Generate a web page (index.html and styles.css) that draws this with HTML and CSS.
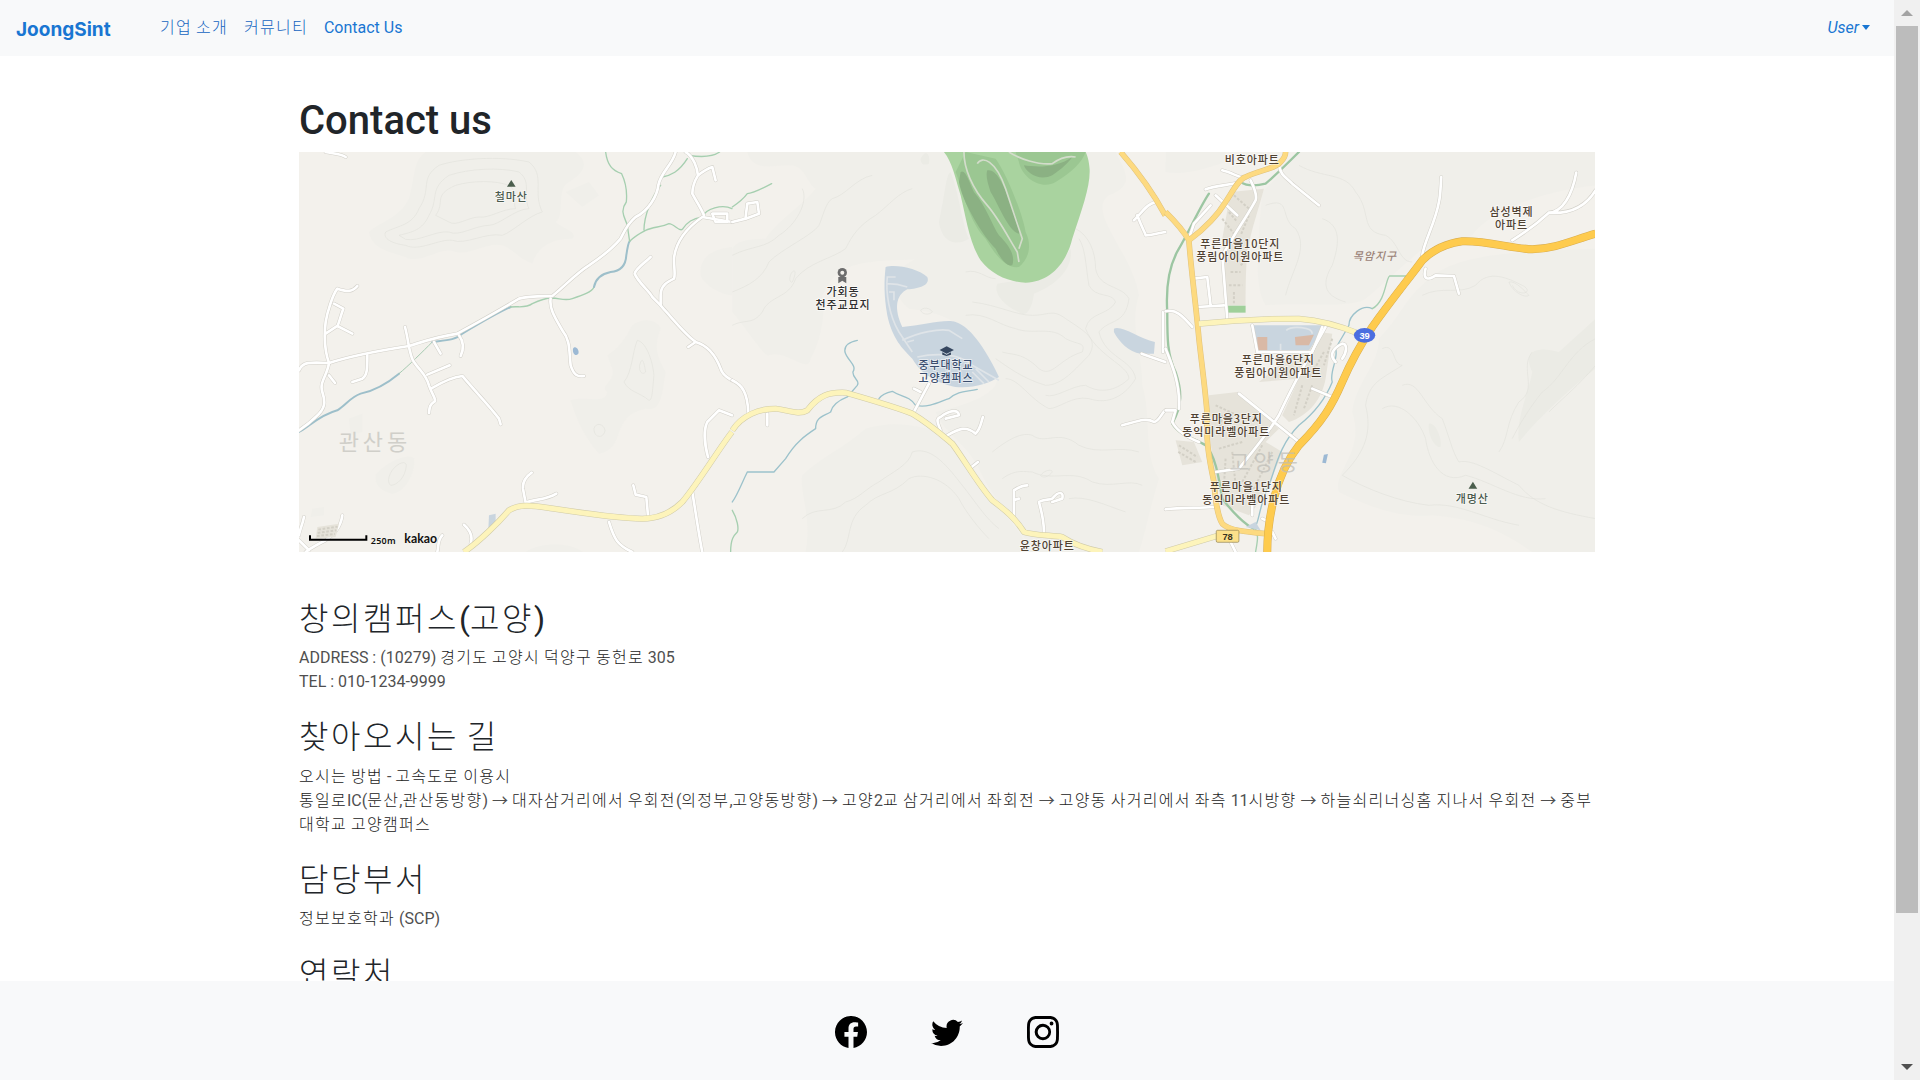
FILE: index.html
```html
<!DOCTYPE html>
<html lang="ko">
<head>
<meta charset="utf-8">
<title>JoongSint - Contact us</title>
<link rel="stylesheet" href="styles.css">
</head>
<body>
<div class="shell">
  <div class="page">
    <nav class="navbar">
      <a class="brand" href="#">JoongSint</a>
      <ul class="nav-list">
        <li><a class="nav-link" href="#"><span class="ko">기업 소개</span></a></li>
        <li><a class="nav-link" href="#"><span class="ko">커뮤니티</span></a></li>
        <li><a class="nav-link" href="#">Contact Us</a></li>
      </ul>
      <a class="nav-link user-link" href="#">User</a>
    </nav>
    <main class="content">
      <div class="container">
        <h1 class="page-title">Contact us</h1>
        <div class="map">
          <svg class="map-svg" viewBox="0 0 1296 400" xmlns="http://www.w3.org/2000/svg">
            <defs>
              <g id="roads-a">
                <path d="M0 655C10 630 30 630 90 633C130 620 180 605 330 582C370 570 410 555 475 545C530 515 610 470 660 440C690 432 730 433 760 432C800 400 830 365 870 340C900 320 940 290 965 260C975 240 985 215 1010 195C1050 175 1075 130 1078 100C1085 60 1120 40 1130 0"/>
                <path d="M1299 210C1270 205 1240 200 1210 195C1160 230 1130 270 1125 320C1125 350 1130 370 1125 380C1105 390 1085 400 1085 430L1085 460"/>
                <path d="M1055 315C1040 330 1010 350 1007 365C1020 395 1050 415 1060 435L1085 460C1120 500 1160 550 1190 570C1225 580 1250 610 1265 650C1270 670 1290 680 1299 685M1190 570L1168 585"/>
                <path d="M1160 0C1185 15 1195 50 1197 70C1185 90 1180 110 1180 125C1190 145 1205 165 1215 190M1197 70C1210 60 1225 50 1240 45L1250 85M1240 185H1285V210H1250Z"/>
                <path d="M80 0C100 5 125 5 140 15M755 440C750 470 770 500 790 535C815 565 810 600 815 640C825 670 835 675 855 672"/>
                <path d="M175 402C160 420 145 420 115 410C100 430 85 480 80 510C75 550 75 590 90 633C85 670 60 690 70 720C80 750 80 770 50 795C30 815 15 825 0 835M105 455L133 470C125 490 120 515 115 522L80 545M115 522L160 545M90 670L108 693"/>
                <path d="M318 525C330 570 330 610 345 630C365 660 380 665 390 700C400 730 415 745 405 750C390 760 392 770 390 783M385 668L452 640M400 708C430 690 460 675 490 672C530 720 570 760 600 800L605 817"/>
                <path d="M205 610C205 650 205 670 190 680L160 690M405 570L425 605M480 550C495 570 495 590 485 612"/>
                <path d="M698 962C680 975 670 990 672 1010L680 1052C710 1040 740 1045 772 1025M1003 1000L1010 1028L1042 1035L1047 1090M930 1110C945 1160 955 1180 1000 1200M495 1118C520 1140 520 1160 515 1175"/>
                <path d="M130 1090C125 1130 100 1150 80 1165C60 1175 40 1185 20 1200M15 1095C10 1120 0 1140 0 1150M0 1165L30 1195M430 1150C415 1165 420 1180 415 1200M1180 1020C1190 1080 1200 1150 1210 1200"/>
                <path d="M1227 915C1215 870 1215 830 1225 810L1260 775L1299 790"/>
              </g>
              <g id="roads-b">
                <path d="M0 210L40 200L80 185L75 150L45 155L40 195M0 685C30 700 45 720 48 780M105 785L105 820"/>
                <path d="M590 695L545 780M545 710L565 720M625 835C615 810 610 800 625 795C650 775 680 770 680 790L640 800M645 850C680 830 700 820 730 845C745 830 745 815 752 795M718 945L737 930"/>
                <path d="M845 1090L845 1015C860 1005 870 1000 885 1000M845 1045L860 1040M935 1140C935 1100 925 1070 920 1050C935 1040 950 1045 960 1040C980 1015 995 1020 990 1040L960 1050"/>
                <path d="M1170 820C1210 810 1240 795 1265 810C1280 810 1290 780 1299 775M1240 250C1255 250 1270 245 1299 240M1205 205C1240 170 1240 160 1270 150M1215 190C1230 230 1240 245 1240 250M1228 605L1299 630M1292 480V600"/>
              </g>
              <g id="roads-c">
                <path d="M120 112C150 100 190 100 225 90M170 55C190 60 210 70 225 75M255 85C265 105 275 130 270 145C240 200 210 240 195 270L170 310L185 500M150 130L215 190M135 160L85 215L70 260M340 40C345 70 360 75 380 95L460 160"/>
                <path d="M85 380L125 375L135 460M95 465L175 460M0 478C30 470 50 490 80 525M0 590C20 640 45 700 40 770M0 775L30 775L20 810C30 830 50 850 100 870M260 520L275 600L440 600L470 525"/>
                <path d="M480 525C450 580 390 680 340 790C310 840 260 900 220 950L150 960M220 725L400 870M440 710L500 735M510 630C490 610 500 590 530 575C545 575 545 600 530 620M0 1072C50 1065 100 1070 145 1065"/>
                <path d="M770 310C775 270 810 210 820 150C825 130 825 100 827 75M780 350C770 385 790 385 810 370L865 372L880 425M1040 265C1080 240 1120 210 1150 182C1190 185 1250 180 1290 115M1150 182C1190 180 1220 130 1232 62"/>
                <path d="M260 1050L260 1090M290 1100L300 1105M320 1140L330 1160M195 1170L210 1200"/>
              </g>
            </defs>
            <rect class="land" width="1296" height="400"/>

            <!-- west third -->
            <g transform="scale(.3333)">
              <path class="hill" d="M210 240C240 210 300 200 330 140C350 70 340 30 380 0L830 0C870 30 860 60 810 90C770 110 800 190 770 210C790 230 840 240 820 260C780 260 720 270 700 335C660 320 640 290 610 280C560 270 520 310 470 300C430 280 380 330 330 320C290 300 220 300 210 240Z"/>
              <path class="hill" d="M925 610C960 590 980 560 1000 520C1040 490 1080 510 1085 530C1060 590 1080 620 1100 660C1090 720 1090 780 1040 770C1000 780 980 790 960 840C950 880 930 900 900 905C860 860 830 800 815 745C860 730 920 760 925 720C900 700 950 690 940 650Z"/>
              <path class="hill" d="M230 970C260 930 330 900 345 920C350 960 320 1020 280 1025C250 1020 225 1000 230 970Z"/>
              <path class="hill" d="M1299 285C1250 290 1200 310 1205 370C1215 400 1270 430 1299 430ZM680 1200C720 1170 820 1170 850 1200Z"/>
              <path class="hill" d="M800 120L870 90L900 130L850 165ZM150 800L190 785L190 840L155 850ZM40 1070L75 1065L75 1090L35 1095Z"/>
              <path class="contour" d="M260 240C300 220 340 220 360 170C400 110 360 80 420 40C480 20 600 10 690 30C740 70 700 120 730 180C690 190 640 240 610 250C560 240 500 280 460 265C420 260 360 300 320 280C280 275 250 260 260 240Z"/>
              <path class="contour" d="M300 250C340 240 370 235 390 190C420 140 390 110 450 70C510 50 600 45 660 60C700 90 670 130 690 170C650 170 600 220 570 220C530 220 480 255 450 240C410 235 360 270 320 262Z"/>
              <path class="contour" d="M410 190C440 150 400 130 470 100C520 85 590 85 630 100C660 120 640 150 650 170C610 170 570 200 540 195C510 195 470 225 450 210Z"/>
              <path class="contour" d="M975 690C1000 660 1000 600 1015 565C1040 570 1060 620 1065 670C1060 720 1060 745 1050 745C1020 720 990 720 975 690ZM1022 640C1030 610 1035 630 1040 660C1030 670 1020 660 1022 640ZM885 830C890 810 915 815 918 835C915 860 885 860 885 830ZM270 975C280 940 320 920 322 940C320 975 295 1000 275 1000C268 995 268 985 270 975Z"/>
              <path class="river blue" d="M0 840C30 825 60 790 115 775C140 760 155 735 185 725C230 715 270 690 300 665"/>
              <path class="river green" d="M300 665C330 640 370 600 400 570"/>
              <path class="river blue" d="M400 570C440 565 470 565 490 545C540 515 600 480 635 465"/>
              <path class="river thin" d="M635 465C660 462 680 470 700 455C720 445 745 438 760 438C785 440 800 447 820 440C850 430 880 420 885 405"/>
              <path class="river blue" d="M885 405C890 380 910 365 935 360C960 358 980 345 982 310C985 290 990 270 992 268"/>
              <path class="river thin" d="M992 268C1010 250 1030 240 1040 235C1060 225 1090 225 1110 215C1125 215 1140 240 1150 232C1165 210 1180 200 1210 195C1220 170 1270 155 1299 170M920 0C925 40 940 55 968 65C980 90 985 120 982 150C960 180 980 200 985 220L992 268M1165 20C1140 60 1115 70 1090 75M1085 100C1060 130 1035 190 1035 235M1170 10C1200 15 1240 15 1262 0"/>
              <use href="#roads-a" class="casing"/>
              <use href="#roads-a" class="fill"/>
              <path class="block" d="M55 1125L120 1115L110 1155L50 1160Z"/>
              <path class="apt-lines" d="M58 1133L116 1124M56 1143L112 1135M54 1152L108 1146"/>
              <path class="campus" d="M570 1090L590 1085L590 1120L568 1135Z"/>
              <path class="lake" d="M822 590C830 578 842 595 838 605C830 615 820 605 822 590Z"/>
              <path class="sec-case" d="M495 1200C540 1170 600 1110 630 1075C660 1055 700 1060 750 1068C830 1080 960 1100 1030 1100C1090 1100 1130 1070 1150 1050C1200 990 1260 890 1299 840"/>
              <path class="sec-fill" d="M495 1200C540 1170 600 1110 630 1075C660 1055 700 1060 750 1068C830 1080 960 1100 1030 1100C1090 1100 1130 1070 1150 1050C1200 990 1260 890 1299 840"/>
              <path class="peak" d="M637 84L650 104H624Z"/>
              <text class="lbl lbl-peak" x="637" y="148">철마산</text>
              <text class="dong" x="228" y="895">관산동</text>
              <path class="scale" d="M33 1150V1163H202V1150"/>
              <text class="scale-txt" x="215" y="1175">250m</text>
              <text class="kakao" x="316" y="1172">kakao</text>
            </g>

            <!-- middle third -->
            <g transform="translate(433.3) scale(.3333)">
              <path class="hill" d="M45 0C60 60 120 40 170 40C220 40 220 90 250 110C200 170 130 210 100 260C40 260 10 270 0 290L0 480C50 540 100 620 110 610C160 590 230 670 235 620C270 560 280 470 270 430C290 400 300 340 420 330C470 320 600 330 640 300L640 0Z"/>
              <path class="hill" d="M600 0H1150C1180 60 1210 100 1130 130C1060 180 1200 300 1220 430C1190 520 1230 600 1230 700C1260 800 1230 900 1280 980C1250 1080 1240 1140 1220 1200H900C860 1120 780 1040 740 950C700 870 640 850 610 780C790 740 820 690 780 640C700 500 620 480 530 470C450 400 480 340 600 300Z"/>
              <path class="hill" d="M210 970C260 920 330 890 400 830C470 810 540 810 640 850C700 900 780 1040 860 1140C880 1170 900 1200 900 1200H220C240 1090 200 1020 210 970Z"/>
              <path class="hill2" d="M620 210C640 120 640 70 655 60C680 120 690 220 710 260C680 280 630 280 620 210ZM795 395C840 385 950 390 1015 290C1025 350 970 400 905 425C900 470 880 500 860 480C830 470 780 430 795 395ZM565 20C580 -10 595 5 590 35C580 40 565 40 565 20Z"/>
              <path class="contour" d="M0 310C60 280 100 290 140 250C190 220 230 150 210 110M0 420C50 400 90 380 110 330C150 290 240 250 260 220C270 200 280 150 300 140C340 130 370 80 420 70M0 520C40 500 60 520 90 480C110 430 170 440 190 380C230 330 300 320 340 290C360 250 380 220 430 190C470 160 500 120 540 110"/>
              <path class="contour" d="M180 360C190 350 192 365 180 390C170 395 170 370 180 360ZM565 475C580 460 600 475 600 480C590 490 570 488 565 475ZM925 970C935 955 960 950 960 960C950 975 930 980 925 970Z"/>
              <path class="contour" d="M700 490C760 480 800 520 850 530C900 550 960 520 1000 560C1040 580 1060 570 1050 600C980 620 960 680 920 650C870 600 840 610 810 600M720 450C800 460 850 490 900 490C950 490 960 470 1000 500C1060 540 1100 560 1070 610C1030 650 990 700 940 700C870 680 820 640 790 620M700 360C740 350 760 380 790 380M1030 230C1070 250 1090 300 1090 350C1100 410 1170 400 1190 440C1180 520 1130 500 1100 540C1120 620 1200 620 1210 680C1180 730 1130 760 1070 740C1020 730 980 770 950 770C890 740 860 680 820 680M1040 260C1060 290 1060 340 1070 400C1090 440 1140 420 1150 450C1130 490 1070 480 1060 530C1090 610 1190 640 1190 680C1160 710 1110 730 1060 700C1020 700 970 740 940 730"/>
              <path class="contour" d="M210 1100C250 1060 300 1090 340 1050C380 1040 400 1010 440 990C480 960 530 940 540 900C600 880 650 950 690 1000C730 1050 760 1100 800 1130M330 1200C360 1160 340 1100 400 1060C440 1020 480 1030 530 980C570 960 640 980 680 1040C700 1080 740 1130 770 1160M780 900C830 860 870 840 900 850C940 880 980 830 1040 880C1100 910 1160 880 1220 900M810 980C850 950 880 960 900 960C960 990 1020 950 1080 990C1140 1010 1190 980 1230 1000M1010 1040C1060 1030 1120 1060 1180 1080"/>
              <path class="river thin" d="M118 95C90 110 60 125 45 125C30 145 15 155 0 165"/>
              <path class="campus" d="M460 345C490 335 560 350 585 375C595 400 560 410 525 412C490 430 485 470 510 525C570 520 640 500 670 510C720 525 770 610 800 675C770 695 720 710 670 705C630 695 575 680 540 620C510 590 480 560 465 490C455 430 455 390 460 345Z"/>
              <path class="campus" d="M1145 530C1170 520 1220 560 1268 570L1265 605L1225 605C1190 600 1160 570 1145 540Z"/>
              <path class="golf" d="M635 0C660 30 670 80 685 130C700 190 710 270 745 325C780 370 830 390 880 392C950 390 1000 340 1020 260C1050 170 1075 100 1072 50C1070 25 1065 10 1060 0Z"/>
              <path class="golf-mid" d="M670 60C690 110 710 210 760 260C790 310 820 350 860 345C890 320 900 280 880 240C870 180 820 60 790 20L700 0ZM860 30C870 80 930 115 970 90C1020 60 1050 30 1060 0H850Z"/>
              <path class="golf-dark" d="M685 60C700 50 710 90 725 120C760 160 780 220 800 250C830 280 850 310 840 340C820 345 800 310 790 290C750 250 690 150 680 90ZM765 55C790 50 810 90 830 140C850 190 870 240 860 245C830 240 800 160 775 120C765 90 760 70 765 55ZM875 40C880 60 920 90 960 70C990 50 1010 30 1020 15C970 50 910 45 875 40Z"/>
              <path class="golf-path" d="M695 0C695 50 720 110 765 160C800 200 830 260 855 300L860 330M735 35C750 10 790 25 820 110C840 170 860 230 870 260L860 290M830 0C860 20 920 40 960 35C980 20 1000 10 1030 15"/>
              <path class="campus-road" d="M490 375H465C460 420 470 490 500 540L540 600M465 395C490 395 510 400 525 405M470 420H485V445M510 565C560 540 620 530 650 535L690 560M525 570L545 565M555 615C600 605 680 600 720 640L800 685M730 650L770 690M720 660L755 695"/>
              <path class="river blue-thin" d="M375 565C350 570 335 580 338 600C345 625 375 640 362 660C360 680 385 685 375 700L345 735C320 745 300 760 295 780C270 795 250 795 250 830C220 850 190 870 160 920L125 960L45 960C30 990 15 1030 0 1050"/>
              <path class="river thin" d="M0 1075C15 1100 20 1130 15 1140C5 1150 -5 1160 -5 1200"/>
              <path class="river blue-thin" d="M440 740C450 725 470 720 480 718C505 735 530 730 550 760C590 770 630 745 650 740C680 715 700 720 735 712"/>
              <use href="#roads-b" class="casing"/>
              <use href="#roads-b" class="fill"/>
              <path class="sec-case" d="M0 835C30 790 80 770 130 770C170 775 200 790 225 775C260 730 290 720 340 722C420 745 490 765 540 785C590 815 630 850 660 875C700 930 740 1000 780 1045C820 1075 850 1100 875 1140C900 1150 960 1150 990 1155C1020 1175 1060 1190 1110 1200"/>
              <path class="sec-fill" d="M0 835C30 790 80 770 130 770C170 775 200 790 225 775C260 730 290 720 340 722C420 745 490 765 540 785C590 815 630 850 660 875C700 930 740 1000 780 1045C820 1075 850 1100 875 1140C900 1150 960 1150 990 1155C1020 1175 1060 1190 1110 1200"/>
              <path class="art-case" d="M1165 0C1200 40 1250 100 1299 190"/>
              <path class="art-fill" d="M1165 0C1200 40 1250 100 1299 190"/>
              <path class="grave" d="M318 375V394L330 386L342 394V375Z"/>
              <circle class="grave" cx="330" cy="362" r="14"/>
              <circle class="grave-in" cx="330" cy="362" r="6"/>
              <text class="lbl lbl-dark" x="332" y="433">가회동</text>
              <text class="lbl lbl-dark" x="332" y="471">천주교묘지</text>
              <path class="cap" d="M643 583L665 594L643 605L622 594ZM630 601V608L643 612L656 608V601L643 608Z"/>
              <text class="lbl lbl-campus" x="641" y="651">중부대학교</text>
              <text class="lbl lbl-campus" x="641" y="691">고양캠퍼스</text>
              <text class="lbl lbl-apt" x="945" y="1193">윤창아파트</text>
            </g>

            <!-- east third -->
            <g transform="translate(866.6) scale(.3333)">
              <path class="hill" d="M0 0H180V30C120 50 60 70 0 60Z"/>
              <path class="hill" d="M290 120C280 250 260 400 300 460C400 450 560 470 600 440C650 400 700 350 760 300C820 270 900 260 920 250C960 190 1100 120 1290 100V0H400C380 30 340 70 290 120Z"/>
              <path class="hill" d="M640 560C700 500 720 440 770 400C850 310 1000 300 1290 290V1200H1100C1000 1130 920 1100 800 1090C700 1100 600 1060 520 1020C500 960 600 900 560 780C570 690 640 640 640 560Z"/>
              <path class="hill2" d="M1060 870C1050 800 1090 720 1100 660C1070 600 1110 580 1180 600L1290 500V650C1200 720 1100 820 1060 870ZM790 815C810 810 830 860 825 885C810 890 785 850 790 815Z"/>
              <path class="contour" d="M650 590C690 570 680 640 710 640C650 680 610 690 600 760C620 840 600 900 530 970C600 1010 700 1050 790 1060C880 1050 950 1100 1060 1120M710 700C760 680 770 760 830 800C850 850 860 900 880 930C920 920 980 960 1060 1000C1110 1060 1180 1080 1290 1100M650 770C700 740 760 800 780 860C790 930 830 1000 900 970C980 990 1060 1050 1140 1040M770 430C830 400 880 430 930 400C970 350 1030 380 1070 400C1110 420 1060 440 1040 400M1030 390C1050 385 1080 420 1090 430C1080 440 1040 420 1030 390"/>
              <path class="contour" d="M1100 600C1060 650 1120 710 1060 750C1020 810 1030 860 1000 900M1290 560C1210 600 1190 680 1130 720C1090 770 1060 820 1040 860M1290 640C1240 700 1190 740 1150 780M300 160C380 130 340 200 390 230C430 290 380 350 360 430M400 40C470 80 540 60 570 120C620 180 580 240 660 250C700 270 700 330 740 330M470 200C530 220 520 280 500 340C470 390 470 430 540 450"/>
              <path class="block" d="M195 120L295 110C280 170 260 220 245 300C240 360 240 420 240 460H185L175 330L170 260Z"/>
              <rect class="park" x="183" y="461" width="57" height="21"/>
              <path class="block" d="M280 690L460 540L500 545L480 680C470 740 430 790 370 810L350 790L400 680Z"/>
              <path class="block" d="M130 730L215 720L340 830L300 870L350 900C330 960 280 1060 250 1090L170 1060L145 950L130 830Z"/>
              <path class="block" d="M30 865L85 870L110 930L50 940Z"/>
              <path class="apt-lines" d="M205 130L250 170M190 180L215 210M170 200L205 245M195 360H225M190 400H230M205 420V455M225 340L245 320M250 190L225 250M500 560L475 640M475 600L430 680M410 700L385 790M440 700L415 770M150 760L215 790M170 790L160 850M160 890L230 870M180 920L175 1000M200 900L210 1000M290 880L230 990M320 900L260 1020M40 880L95 915M38 900L90 930"/>
              <path class="river green-wide" d="M400 0C370 30 330 70 300 95C260 105 240 100 225 90M130 125C100 170 70 240 40 290C10 340 0 400 5 480C5 560 5 610 30 660C50 720 50 760 20 815C40 850 90 860 120 880C150 910 160 980 170 1040C200 1080 240 1120 265 1130"/>
              <path class="river blue-thin" d="M265 1130C280 1120 280 1060 310 1000C330 950 340 880 400 820C450 780 480 740 500 690C490 660 520 620 510 590C520 570 540 540 550 520C550 490 590 455 620 470"/>
              <path class="river thin" d="M620 470C660 450 660 380 672 372L725 372M270 1200C275 1170 280 1150 270 1130"/>
              <path class="campus" d="M255 520H470C460 550 430 600 420 605L275 600Z"/>
              <path class="campus" d="M240 1125L285 1135L270 1110Z"/>
              <path class="bldg" d="M275 555H305V595H275ZM388 555L445 548L430 580H390Z"/>
              <path class="campus-road" d="M362 535C380 520 440 525 440 545M345 575V595"/>
              <path class="lake" d="M475 908L487 906L481 934L470 932Z"/>
              <use href="#roads-c" class="casing"/>
              <use href="#roads-c" class="fill"/>
              <path class="art-case" d="M0 180C20 200 50 230 70 265C75 340 90 450 100 560C110 650 120 720 125 790C120 860 130 920 145 990C150 1050 155 1090 170 1115C190 1135 240 1140 300 1145"/>
              <path class="art-case" d="M70 265C110 235 150 200 180 150C200 120 220 80 240 75C280 55 330 50 345 30C355 20 360 10 360 0"/>
              <path class="art-fill" d="M0 180C20 200 50 230 70 265C75 340 90 450 100 560C110 650 120 720 125 790C120 860 130 920 145 990C150 1050 155 1090 170 1115C190 1135 240 1140 300 1145"/>
              <path class="art-fill" d="M70 265C110 235 150 200 180 150C200 120 220 80 240 75C280 55 330 50 345 30C355 20 360 10 360 0"/>
              <path class="sec-case" d="M100 515C200 505 310 500 400 500C470 505 520 520 580 545M0 1198C60 1180 110 1165 155 1152"/>
              <path class="sec-fill" d="M100 515C200 505 310 500 400 500C470 505 520 520 580 545M0 1198C60 1180 110 1165 155 1152"/>
              <path class="maj-case" d="M1290 245C1220 265 1170 290 1100 292C1040 290 960 265 890 268C840 275 800 295 770 325C730 380 680 440 620 525C590 570 560 620 530 690C500 760 470 810 400 880C360 930 340 980 325 1040C310 1100 305 1160 305 1200"/>
              <path class="maj-fill" d="M1290 245C1220 265 1170 290 1100 292C1040 290 960 265 890 268C840 275 800 295 770 325C730 380 680 440 620 525C590 570 560 620 530 690C500 760 470 810 400 880C360 930 340 980 325 1040C310 1100 305 1160 305 1200"/>
              <ellipse class="route-39" cx="597" cy="550" rx="32" ry="22"/>
              <text class="route-txt route-txt-w" x="597" y="560">39</text>
              <rect class="route-78" x="152" y="1135" width="68" height="36" rx="4"/>
              <text class="route-txt route-txt-d" x="186" y="1163">78</text>
              <text class="lbl lbl-apt" x="260" y="36">비호아파트</text>
              <text class="lbl lbl-apt" x="224" y="288">푸른마을10단지</text>
              <text class="lbl lbl-apt" x="224" y="326">풍림아이원아파트</text>
              <text class="lbl lbl-apt" x="1038" y="193">삼성벽제</text>
              <text class="lbl lbl-apt" x="1038" y="230">아파트</text>
              <text class="lbl lbl-district" x="628" y="325">목암지구</text>
              <text class="lbl lbl-apt" x="338" y="636">푸른마을6단지</text>
              <text class="lbl lbl-apt" x="338" y="675">풍림아이원아파트</text>
              <text class="lbl lbl-apt" x="182" y="813">푸른마을3단지</text>
              <text class="lbl lbl-apt" x="182" y="853">동익미라벨아파트</text>
              <text class="dong dong-light" x="300" y="955">고양동</text>
              <text class="lbl lbl-apt" x="242" y="1016">푸른마을1단지</text>
              <text class="lbl lbl-apt" x="242" y="1056">동익미라벨아파트</text>
              <path class="peak" d="M922 989L935 1010H909Z"/>
              <text class="lbl lbl-peak" x="920" y="1053">개명산</text>
            </g>
          </svg>
        </div>

        <section class="info first">
          <h2><span class="ko">창의캠퍼스</span>(<span class="ko">고양</span>)</h2>
          <p>ADDRESS : (10279) <span class="ko">경기도 고양시 덕양구 동헌로</span> 305<br>TEL : 010-1234-9999</p>
        </section>
        <section class="info">
          <h2><span class="ko">찾아오시는 길</span></h2>
          <p><span class="ko">오시는 방법</span> - <span class="ko">고속도로 이용시</span><br><span class="ko">통일로</span>IC(<span class="ko">문산</span>,<span class="ko">관산동방향</span>) → <span class="ko">대자삼거리에서 우회전</span>(<span class="ko">의정부</span>,<span class="ko">고양동방향</span>) → <span class="ko">고양</span>2<span class="ko">교 삼거리에서 좌회전</span> → <span class="ko">고양동 사거리에서 좌측</span> 11<span class="ko">시방향</span> → <span class="ko">하늘쇠리너싱홈 지나서 우회전</span> → <span class="ko">중부</span><span class="ko">대학교 고양캠퍼스</span></p>
        </section>
        <section class="info">
          <h2><span class="ko">담당부서</span></h2>
          <p><span class="ko">정보보호학과</span> (SCP)</p>
        </section>
        <section class="info">
          <h2><span class="ko">연락처</span></h2>
        </section>
      </div>
    </main>
    <footer class="footer">
      <a class="social" href="#" aria-label="Facebook">
        <svg viewBox="0 0 16 16" class="social-icon"><path d="M16 8.049c0-4.446-3.582-8.05-8-8.05C3.58 0-.002 3.603-.002 8.05c0 4.017 2.926 7.347 6.75 7.951v-5.625h-2.03V8.05H6.75V6.275c0-2.017 1.195-3.131 3.022-3.131.876 0 1.791.157 1.791.157v1.98h-1.009c-.993 0-1.303.621-1.303 1.258v1.51h2.218l-.354 2.326H9.25V16c3.824-.604 6.75-3.934 6.75-7.951z"/></svg>
      </a>
      <a class="social" href="#" aria-label="Twitter">
        <svg viewBox="0 0 16 16" class="social-icon"><path d="M5.026 15c6.038 0 9.341-5.003 9.341-9.334 0-.14 0-.282-.006-.422A6.685 6.685 0 0 0 16 3.542a6.658 6.658 0 0 1-1.889.518 3.301 3.301 0 0 0 1.447-1.817 6.533 6.533 0 0 1-2.087.793A3.286 3.286 0 0 0 7.875 6.03a9.325 9.325 0 0 1-6.767-3.429 3.289 3.289 0 0 0 1.018 4.382A3.323 3.323 0 0 1 .64 6.575v.045a3.288 3.288 0 0 0 2.632 3.218 3.203 3.203 0 0 1-.865.115 3.23 3.23 0 0 1-.614-.057 3.283 3.283 0 0 0 3.067 2.277A6.588 6.588 0 0 1 .78 13.58a6.32 6.32 0 0 1-.78-.045A9.344 9.344 0 0 0 5.026 15z"/></svg>
      </a>
      <a class="social" href="#" aria-label="Instagram">
        <svg viewBox="0 0 16 16" class="social-icon"><path d="M8 0C5.829 0 5.556.01 4.703.048 3.85.088 3.269.222 2.76.42a3.917 3.917 0 0 0-1.417.923A3.927 3.927 0 0 0 .42 2.76C.222 3.268.087 3.85.048 4.7.01 5.555 0 5.827 0 8.001c0 2.172.01 2.444.048 3.297.04.852.174 1.433.372 1.942.205.526.478.972.923 1.417.444.445.89.719 1.416.923.51.198 1.09.333 1.942.372C5.555 15.99 5.827 16 8 16s2.444-.01 3.298-.048c.851-.04 1.434-.174 1.943-.372a3.916 3.916 0 0 0 1.416-.923c.445-.445.718-.891.923-1.417.197-.509.332-1.09.372-1.942C15.99 10.445 16 10.173 16 8s-.01-2.445-.048-3.299c-.04-.851-.175-1.433-.372-1.941a3.926 3.926 0 0 0-.923-1.417A3.911 3.911 0 0 0 13.24.42c-.51-.198-1.092-.333-1.943-.372C10.443.01 10.172 0 7.998 0h.003zm-.717 1.442h.718c2.136 0 2.389.007 3.232.046.78.035 1.204.166 1.486.275.373.145.64.319.92.599.28.28.453.546.598.92.11.281.24.705.275 1.485.039.843.047 1.096.047 3.231s-.008 2.389-.047 3.232c-.035.78-.166 1.203-.275 1.485a2.47 2.47 0 0 1-.599.919c-.28.28-.546.453-.92.598-.28.11-.704.24-1.485.276-.843.038-1.096.047-3.232.047s-2.39-.009-3.233-.047c-.78-.036-1.203-.166-1.485-.276a2.478 2.478 0 0 1-.92-.598 2.48 2.48 0 0 1-.6-.92c-.109-.281-.24-.705-.275-1.485-.038-.843-.046-1.096-.046-3.233 0-2.136.008-2.388.046-3.231.036-.78.166-1.204.276-1.486.145-.373.319-.64.599-.92.28-.28.546-.453.92-.598.282-.11.705-.24 1.485-.276.738-.034 1.024-.044 2.515-.045v.002zm4.988 1.328a.96.96 0 1 0 0 1.92.96.96 0 0 0 0-1.92zm-4.27 1.122a4.109 4.109 0 1 0 0 8.217 4.109 4.109 0 0 0 0-8.217zm0 1.441a2.667 2.667 0 1 1 0 5.334 2.667 2.667 0 0 1 0-5.334z"/></svg>
      </a>
    </footer>
  </div>
  <div class="scrollbar" aria-hidden="true">
    <div class="arrow arrow-up"></div>
    <div class="thumb"></div>
    <div class="arrow arrow-down"></div>
  </div>
</div>
</body>
</html>
```

FILE: styles.css
```css
* { box-sizing: border-box; }
html, body { margin: 0; height: 100%; overflow: hidden; }
body {
  font-family: Roboto, "Noto Sans CJK KR", sans-serif;
  font-size: 16px;
  line-height: 24px;
  color: #4f4f4f;
  background: #fff;
}
a { text-decoration: none; }

.ko { letter-spacing: .08em; word-spacing: -.08em; font-weight: 300; }
.info p .ko { color: #222; }
.nav-link .ko { color: #1565c0; }

.shell { display: flex; height: 100vh; }
.page { flex: 1; min-width: 0; display: flex; flex-direction: column; }

/* navbar */
.navbar {
  height: 56px;
  flex: none;
  display: flex;
  align-items: center;
  padding: 0 16px;
  background: #f8f9fa;
}
.brand {
  font-family: Inter, "Noto Sans", sans-serif;
  font-weight: 700;
  font-size: 19px;
  color: #1976d2;
  width: 136px;
  padding-top: 3px;
}
.nav-list { display: flex; list-style: none; margin: 0; padding: 0; flex: 1; }
.nav-link { display: block; padding: 0 8px 1px; color: #1976d2; }
.user-link { font-style: italic; display: flex; align-items: center; }
.user-link::after {
  content: "";
  margin-left: 3px;
  border-top: 5px solid #1976d2;
  border-left: 4.8px solid transparent;
  border-right: 4.8px solid transparent;
}

/* content */
.content { flex: 1; min-height: 0; overflow: hidden; }
.container { width: 1320px; margin: 0 auto; padding: 41px 12px 0; }
.page-title {
  margin: 0 0 7px;
  font-size: 40px;
  line-height: 48px;
  font-weight: 500;
  color: #212529;
}
.map { height: 400px; }
.map-svg { display: block; width: 100%; height: 100%; }

.info { margin-bottom: 24px; }
.info.first { margin-top: 48px; }
.info h2 {
  margin: 0 0 8px;
  font-size: 32px;
  line-height: 38.4px;
  font-weight: 400;
  color: #212529;
}
.info p { margin: 0; }

/* footer */
.footer {
  height: 99px;
  flex: none;
  display: flex;
  justify-content: center;
  align-items: center;
  gap: 64px;
  padding-top: 3px;
  background: #f8f9fa;
}
.social { display: block; height: 32px; }
.social-icon { display: block; width: 32px; height: 32px; fill: #000; }

/* window scrollbar */
.scrollbar {
  width: 26px;
  flex: none;
  display: flex;
  flex-direction: column;
  align-items: center;
  background: #f0f0f0;
}
.thumb { width: 22px; height: 887px; background: #bcbcbc; flex: none; }
.arrow { width: 0; height: 0; flex: none; border-left: 6px solid transparent; border-right: 6px solid transparent; }
.arrow-up { margin: 10px 0 10px; border-bottom: 6px solid #a3a3a3; }
.arrow-down { margin-top: auto; margin-bottom: 10px; border-top: 6px solid #505050; }

/* map artwork */
.land { fill: #f3f1ec; }
.hill { fill: #f0efea; }
.hill2 { fill: #ebebe5; }
.contour { fill: none; stroke: #e3e3dd; stroke-width: 2; }
.river { fill: none; stroke-linecap: round; stroke-linejoin: round; }
.blue { stroke: #9dbfca; stroke-width: 6; }
.green { stroke: #a5c9b0; stroke-width: 3; }
.thin { stroke: #a6cfb0; stroke-width: 4; }
.blue-thin { stroke: #9cc2cb; stroke-width: 4; }
.green-wide { stroke: #9cc6a2; stroke-width: 7; }
.casing, .fill { fill: none; stroke-linecap: round; stroke-linejoin: round; }
.casing { stroke: #d2d0c9; stroke-width: 11; }
.fill { stroke: #fff; stroke-width: 8; }
.sec-case, .sec-fill, .art-case, .art-fill, .maj-case, .maj-fill { fill: none; stroke-linejoin: round; }
.sec-case { stroke: #cfcaa8; stroke-width: 18; }
.sec-fill { stroke: #fdf4bb; stroke-width: 15; }
.art-case { stroke: #e0c27c; stroke-width: 17; }
.art-fill { stroke: #fdda80; stroke-width: 14; }
.maj-case { stroke: #d8ac4e; stroke-width: 24; }
.maj-fill { stroke: #fecb4e; stroke-width: 21; }
.block { fill: #e6e3da; }
.apt-lines { fill: none; stroke: #d3d0c6; stroke-width: 6; stroke-dasharray: 8 5; }
.park { fill: #9fd09a; }
.bldg { fill: #d9b9a6; }
.lake { fill: #9cb9d4; }
.campus { fill: #c9d5df; }
.campus-road { fill: none; stroke: #dfe4e8; stroke-width: 5; }
.golf { fill: #a9d39f; }
.golf-mid { fill: #9bc792; }
.golf-dark { fill: #8bb183; }
.golf-path { fill: none; stroke: #d3dccb; stroke-width: 5; }
.peak { fill: #4b5e4d; }
.cap { fill: #35465f; }
.grave { fill: #6d6d6d; }
.grave-in { fill: #f3f1ec; }
.scale { fill: none; stroke: #000; stroke-width: 6; }
.scale-txt { font-family: "Noto Sans", sans-serif; font-size: 27px; font-weight: 600; fill: #111; letter-spacing: 1px; }
.kakao { font-family: Lato, sans-serif; font-size: 37px; font-weight: 700; fill: #111; }
.lbl {
  font-family: "Noto Sans CJK KR", sans-serif;
  font-size: 33px;
  font-weight: 500;
  letter-spacing: .08em;
  text-anchor: middle;
  paint-order: stroke;
  stroke: #fff;
  stroke-width: 5px;
  stroke-opacity: .6;
}
.lbl-peak { fill: #4b5a4e; }
.lbl-dark { fill: #2e2e2e; }
.lbl-campus { fill: #3a4d6e; }
.lbl-apt { fill: #4f4132; }
.lbl-district { fill: #9b8378; font-style: italic; letter-spacing: 3px; stroke: none; }
.dong {
  font-family: "Noto Sans CJK KR", sans-serif;
  font-size: 66px;
  text-anchor: middle;
  letter-spacing: 12px;
  fill: #d0cfc9;
}
.dong-light { fill: #bdbcb6; fill-opacity: .7; }
.route-39 { fill: #4b6ee0; }
.route-78 { fill: #fbe08a; stroke: #8e7f4c; stroke-width: 2; }
.route-txt { font-family: "Liberation Sans", sans-serif; font-size: 28px; font-weight: 700; text-anchor: middle; }
.route-txt-w { fill: #fff; }
.route-txt-d { fill: #3a3320; }
```
